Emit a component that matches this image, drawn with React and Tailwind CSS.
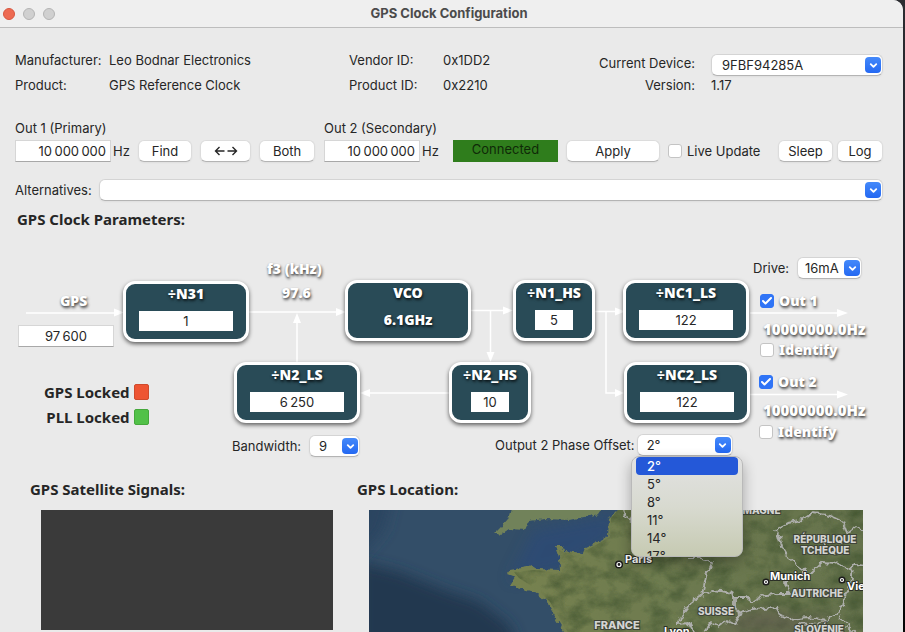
import React, { useState } from 'react';
import clsx from 'clsx';
import { Check, ChevronDown } from 'lucide-react';

const PHASES = ['2°', '5°', '8°', '11°', '14°', '17°'];

const GLOW = '[text-shadow:1px_2px_3px_rgba(0,0,0,0.6),0px_1px_2px_rgba(0,0,0,0.35)]';

function SelectBox({ label, id, options, className, selectClass = 'pl-2', ...props }) {
  return (
    <div className={clsx('relative h-[22px]', className)}>
      <select
        id={id}
        aria-label={label}
        className={clsx(
          'h-full w-full appearance-none rounded-md border border-[#d4d4d4] border-b-[#b4b4b4] bg-white text-[13px] leading-4 text-[#262626] shadow-xs outline-none',
          selectClass
        )}
        {...props}
      >
        {options.map((option) => (
          <option key={option}>{option}</option>
        ))}
      </select>
      <span className="pointer-events-none absolute top-[3px] right-[2px] flex size-4 items-center justify-center rounded-sm bg-gradient-to-b from-[#4489fa] to-[#2468f2] text-white">
        <ChevronDown size={11} strokeWidth={4} />
      </span>
    </div>
  );
}

function PushButton({ children, className, ...props }) {
  return (
    <button
      className={clsx(
        'flex h-[22px] items-center justify-center rounded-md border border-[#dcdcdc] border-b-[#b4b4b4] bg-white shadow-xs active:bg-gray-100',
        className
      )}
      {...props}
    >
      {children}
    </button>
  );
}

function TickBox({ id, ...props }) {
  return (
    <span className="relative flex size-[14px] shrink-0">
      <input
        id={id}
        type="checkbox"
        className="peer size-full appearance-none rounded-[3px] border border-[#c4c4c4] bg-white checked:border-[#2f74f6] checked:bg-[#2f74f6]"
        {...props}
      />
      <Check
        size={12}
        strokeWidth={4}
        className="pointer-events-none absolute top-px left-px hidden text-white peer-checked:block"
      />
    </span>
  );
}

function FrequencyField({ id, label, className }) {
  return (
    <div className={className}>
      <label htmlFor={id} className="block whitespace-nowrap">
        {label}
      </label>
      <div className="mt-1 flex items-center gap-[2px]">
        <input
          id={id}
          defaultValue={'10\u2009000\u2009000'}
          className="h-[22px] w-24 border border-[#d6d6d6] border-b-[#a8a8a8] bg-white pr-1 text-right outline-none"
        />
        <span>Hz</span>
      </div>
    </div>
  );
}

function Node({ title, value, text, place, width, inputWidth }) {
  return (
    <div
      className={clsx(
        'absolute flex h-[61px] flex-col items-center gap-[7px] rounded-xl border-[3px] border-white bg-[#294b57] shadow-[0_2px_4px_rgba(0,0,0,0.6)]',
        place,
        width
      )}
    >
      <span className={clsx('font-[Noto_Sans] text-sm leading-5 font-black text-white', GLOW)}>{title}</span>
      {text ? (
        <span className={clsx('font-[Noto_Sans] text-sm leading-5 font-black text-white', GLOW)}>{text}</span>
      ) : (
        <input
          aria-label={title}
          defaultValue={value}
          className={clsx('h-5 bg-white text-center outline-none', inputWidth)}
        />
      )}
    </div>
  );
}

function Caption({ children, place, size = 'text-sm' }) {
  return (
    <span
      className={clsx(
        'absolute font-[Noto_Sans] leading-5 font-black whitespace-nowrap text-white',
        size,
        GLOW,
        place
      )}
    >
      {children}
    </span>
  );
}

function OutputToggle({ id, label, place, ...props }) {
  return (
    <div className={clsx('absolute flex items-center gap-[5px]', place)}>
      <TickBox id={id} {...props} />
      <label
        htmlFor={id}
        className={clsx('font-[Noto_Sans] text-sm leading-5 font-black whitespace-nowrap text-white', GLOW)}
      >
        {label}
      </label>
    </div>
  );
}

function Lamp({ label, color }) {
  return (
    <div className="flex items-center justify-end gap-1">
      <span className="font-[Noto_Sans] text-[15px] leading-5 font-bold whitespace-nowrap">{label}</span>
      <span className={clsx('h-4 w-[15px] rounded-xs border', color)} />
    </div>
  );
}

function Wires() {
  return (
    <svg className="absolute inset-0" width="880" height="232" fill="none" stroke="#fff" strokeWidth="1.5">
      <path d="M26 79H116M249 78H338M471 76.500H505M595 77.500H617M750 79H838M750 160.500H838" />
      <path d="M297 129V88M490.500 77V120M449 159H369M606 78V159H617" />
      <g fill="#fff" stroke="none">
        <path d="M114 74.500L124 78.500L114 82.500ZM336 74L346 78L336 82ZM503 72.500L513 76.500L503 80.500ZM615 73.500L625 77.500L615 81.500Z" />
        <path d="M615 155L624 159L615 163ZM837 75L848 79L837 83ZM837 156.500L848 160.500L837 164.500Z" />
        <path d="M293 89L297 79L301 89ZM486.500 118L490.500 128L494.500 118ZM370 155L360 159L370 163Z" />
      </g>
    </svg>
  );
}

function PhaseMenu({ value, onPick }) {
  return (
    <ul
      role="listbox"
      aria-label="Phase offsets"
      className="absolute top-[222px] left-[631px] z-10 h-[101px] w-28 overflow-hidden rounded-lg border border-[#b9b9b9] bg-gradient-to-b from-[#e2e2e2] via-[#d8dad0] to-[#c6cab2] px-1 shadow-[0_6px_14px_rgba(0,0,0,0.3)]"
    >
      {PHASES.map((phase) => (
        <li key={phase}>
          <button
            role="option"
            aria-selected={phase === value}
            onClick={() => onPick(phase)}
            className={clsx(
              'block h-[18px] w-[102px] rounded-sm pl-[11px] text-left leading-[17px]',
              phase === value ? 'bg-[#2458d8] font-medium text-white' : 'text-[#262626]'
            )}
          >
            {phase}
          </button>
        </li>
      ))}
    </ul>
  );
}

function LocationMap() {
  return (
    <svg
      viewBox="0 0 494 122"
      preserveAspectRatio="xMinYMin slice"
      className="block w-full"
      role="img"
      aria-label="Satellite map of western Europe"
    >
      <defs>
        <filter id="coast" filterUnits="userSpaceOnUse" x="-20" y="-20" width="540" height="170">
          <feTurbulence type="fractalNoise" baseFrequency="0.2" numOctaves="2" seed="4" />
          <feDisplacementMap in="SourceGraphic" scale="5" xChannelSelector="R" yChannelSelector="G" />
          <feGaussianBlur stdDeviation="0.5" />
        </filter>
        <filter id="border" filterUnits="userSpaceOnUse" x="-20" y="-20" width="540" height="170">
          <feTurbulence type="fractalNoise" baseFrequency="0.18" numOctaves="1" seed="7" />
          <feDisplacementMap in="SourceGraphic" scale="9" xChannelSelector="R" yChannelSelector="G" />
        </filter>
        <filter id="terrain" filterUnits="userSpaceOnUse" x="0" y="0" width="494" height="122">
          <feTurbulence type="fractalNoise" baseFrequency="0.05 0.07" numOctaves="5" seed="9" />
          <feColorMatrix values="0 0 0 0 0.05  0 0 0 0 0.085  0 0 0 0 0.028  1.4 0 0 0 -0.5" />
          <feComposite in2="SourceGraphic" operator="in" />
        </filter>
        <filter id="fade" filterUnits="userSpaceOnUse" x="-60" y="-60" width="620" height="260">
          <feGaussianBlur stdDeviation="7" />
        </filter>
        <linearGradient id="land" x1="0" x2="1">
          <stop offset="0" stopColor="#778250" />
          <stop offset="0.4" stopColor="#6e7b50" />
          <stop offset="1" stopColor="#64714c" />
        </linearGradient>
      </defs>

      <rect width="494" height="122" fill="#334e68" />
      <path d="M-20 -20H25L15 20L-20 60Z" fill="#2a4460" filter="url(#fade)" />
      <path d="M-10 52L30 62L75 80L110 92L140 115L150 140H-10Z" fill="#22384f" filter="url(#fade)" />
      <path d="M165 20L250 4L240 30L190 62L140 70Z" fill="#29497a" opacity="0.6" filter="url(#fade)" />

      <g filter="url(#coast)">
        <path
          d="M144 -8L139 9L131 18L126 23L131 25L140 19L156 20L160 11L176 9L200 10L215 7L230 4L238 -8Z"
          fill="#71825a"
        />
        <path
          d="M256 -8L240 8L239 27L216 38L214 43L196 41L193 36L186 36L190 47L191 60L168 59L163 56L141 60L138 64L146 67L141 75L168 83L178 92L184 103L198 126H510V-8Z"
          fill="url(#land)"
        />
      </g>
      <path
        d="M256 -8L242 8L241 27L218 40L196 43L190 40L193 62L165 60L145 62L150 68L170 81L181 92L201 126H494V-8Z"
        fill="#000"
        filter="url(#terrain)"
      />
      <path d="M345 122L370 104L400 99L430 108L470 104L440 122Z" fill="#5e5850" opacity="0.6" filter="url(#fade)" />

      <g fill="none" stroke="#aeafac" strokeWidth="1.800" strokeLinejoin="round" filter="url(#border)">
        <path d="M254 -2L256 7L262 10L266 3" />
        <path d="M319 48L332 48L343 53L337 66L333 85L344 80L358 82L366 87L366 98L372 103L384 99L406 97L410 104L420 109L440 107L458 110L468 104L474 95L476 85L481 75L483 57" />
        <path d="M366 87L378 87L384 92L392 87L408 84L420 84L416 72L418 64L430 64L436 62L444 62L454 52L466 53L478 58L486 55L498 56" />
        <path d="M436 62L421 50L413 37L411 28L406 20L420 13L434 10L444 2L456 4L466 8L474 12L478 23L486 17L498 22" />
        <path d="M333 85L322 93L314 103L309 114L320 113L326 124M334 124L342 113L350 116L358 110L366 114L372 104" />
        <path d="M470 106L478 116L486 124M428 124L430 114L446 116L458 110" />
      </g>

      <g
        className="font-[Inter] text-[10px] font-extrabold"
        fill="#d4d5d2"
        stroke="#3f4438"
        strokeWidth="2"
        paintOrder="stroke"
        textAnchor="middle"
      >
        <text x="380" y="4">ALLEMAGNE</text>
        <text x="456" y="33">RÉPUBLIQUE</text>
        <text x="456" y="44">TCHÈQUE</text>
        <text x="448" y="87">AUTRICHE</text>
        <text x="347" y="105">SUISSE</text>
        <text x="248" y="119" className="text-[11px]">FRANCE</text>
        <text x="450" y="123">SLOVÉNIE</text>
      </g>
      <g className="font-[Inter] text-[11px] font-bold" fill="#fff" stroke="#2b2f26" strokeWidth="2" paintOrder="stroke">
        <text x="256" y="53">Paris</text>
        <text x="401" y="70">Munich</text>
        <text x="478" y="80">Vienne</text>
        <text x="295" y="125">Lyon</text>
      </g>
      <g fill="#1c1c1c" stroke="#fff" strokeWidth="1.200">
        <circle cx="250" cy="54.500" r="3.500" stroke="#1c1c1c" />
        <circle cx="250" cy="54.500" r="2" />
        <circle cx="397" cy="72" r="3" stroke="#1c1c1c" />
        <circle cx="397" cy="72" r="1.500" />
        <circle cx="473" cy="70" r="3" stroke="#1c1c1c" />
        <circle cx="473" cy="70" r="1.500" />
      </g>
    </svg>
  );
}

function App() {
  const [phase, setPhase] = useState('2°');
  const [menuOpen, setMenuOpen] = useState(true);

  const pickPhase = (next) => {
    setPhase(next);
    setMenuOpen(false);
  };

  return (
    <div className="h-screen overflow-hidden bg-gradient-to-b from-[#2c2d31] via-[#1b1d26] to-[#050505] pr-[2px] font-[Inter,sans-serif] text-[13px] leading-4 text-[#262626]">
      <div className="flex min-h-full flex-col overflow-hidden rounded-tr-[10px] bg-[#eaeaea]">
        <header className="flex h-7 shrink-0 items-center border-b border-[#bdbdbd] bg-[#efefef] pl-[3px]">
          <div className="flex gap-2">
            <button aria-label="Close" className="size-3 rounded-full border border-[#d8563f] bg-[#ed6a52]" />
            <button aria-label="Minimise" className="size-3 rounded-full border border-[#b4b4b4] bg-[#d0d0d0]" />
            <button aria-label="Zoom" className="size-3 rounded-full border border-[#b4b4b4] bg-[#d0d0d0]" />
          </div>
          <h1 className="flex-1 pr-[60px] pb-px text-center font-bold text-[#4b4b4b]">GPS Clock Configuration</h1>
        </header>

        <section className="flex justify-between pt-5 pr-5 pl-[15px]">
          <dl className="grid grid-cols-[94px_240px_94px_auto] leading-[25px] whitespace-nowrap">
            <dt>Manufacturer:</dt>
            <dd>Leo Bodnar Electronics</dd>
            <dt>Vendor ID:</dt>
            <dd>0x1DD2</dd>
            <dt>Product:</dt>
            <dd>GPS Reference Clock</dd>
            <dt>Product ID:</dt>
            <dd>0x2210</dd>
          </dl>
          <div className="grid grid-cols-[auto_172px] content-start items-center gap-x-4 gap-y-px pt-[6px] text-right">
            <label htmlFor="device" className="pb-1">
              Current Device:
            </label>
            <SelectBox id="device" options={['9FBF94285A']} selectClass="pl-[10px]" />
            <span>Version:</span>
            <span className="text-left">1.17</span>
          </div>
        </section>

        <section className="flex items-end pt-[22px] pr-5 pl-[15px]">
          <FrequencyField id="out1" label="Out 1 (Primary)" className="w-[123px] shrink-0" />
          <PushButton className="w-[54px]">Find</PushButton>
          <PushButton className="ml-2 w-[51px]" aria-label="Swap outputs">
            <svg width="24" height="10" viewBox="0 0 24 10" fill="none" stroke="currentColor" strokeWidth="1.400">
              <path d="M10.500 5H1.500M5.500 1L1.500 5L5.500 9M13.500 5H22.500M18.500 1L22.500 5L18.500 9" />
            </svg>
          </PushButton>
          <PushButton className="ml-2 w-14">Both</PushButton>
          <FrequencyField id="out2" label="Out 2 (Secondary)" className="ml-[9px] w-[129px] shrink-0" />
          <div className="h-[22px] w-[105px] bg-[#2f7d1c] pt-px text-center text-[#0f2a08]">Connected</div>
          <PushButton className="ml-2 w-[94px]">Apply</PushButton>
          <div className="ml-2 flex h-[22px] items-center gap-[5px]">
            <TickBox id="live" />
            <label htmlFor="live" className="whitespace-nowrap">
              Live Update
            </label>
          </div>
          <PushButton className="ml-auto w-[55px]">Sleep</PushButton>
          <PushButton className="ml-1 w-[46px]">Log</PushButton>
        </section>

        <section className="flex items-center gap-2 pt-[17px] pr-5 pl-[15px]">
          <label htmlFor="alternatives" className="w-[76px]">
            Alternatives:
          </label>
          <SelectBox id="alternatives" options={['']} className="flex-1" />
        </section>

        <h2 className="pt-2 pl-[17px] font-[Noto_Sans] text-[15px] leading-5 font-bold">GPS Clock Parameters:</h2>

        <section className="relative mt-[5px] h-[232px] shrink-0">
          <Wires />

          <Caption place="top-[57px] left-[60px]">GPS</Caption>
          <input
            aria-label="GPS frequency"
            defaultValue={'97\u2009600'}
            className="absolute top-[91px] left-[18px] h-[22px] w-24 border border-[#d6d6d6] border-b-[#a8a8a8] bg-white text-center outline-none"
          />
          <Caption place="top-[25px] left-[267px]">f3 (kHz)</Caption>
          <Caption place="top-[49px] left-[282px]">97.6</Caption>

          <Node title="÷N31" value="1" place="top-[47px] left-[123px]" width="w-[126px]" inputWidth="w-[94px]" />
          <Node title="VCO" text="6.1GHz" place="top-[46px] left-[345px]" width="w-[126px]" />
          <Node title="÷N1_HS" value="5" place="top-[46px] left-[513px]" width="w-[82px]" inputWidth="w-[38px]" />
          <Node title="÷NC1_LS" value="122" place="top-[46px] left-[623px]" width="w-[126px]" inputWidth="w-[94px]" />
          <Node title="÷N2_LS" value={'6\u2009250'} place="top-[128px] left-[234px]" width="w-[126px]" inputWidth="w-[94px]" />
          <Node title="÷N2_HS" value="10" place="top-[128px] left-[449px]" width="w-[82px]" inputWidth="w-[38px]" />
          <Node title="÷NC2_LS" value="122" place="top-[128px] left-[624px]" width="w-[126px]" inputWidth="w-[94px]" />

          <div className="absolute top-[23px] left-[753px] flex items-center gap-2">
            <label htmlFor="drive">Drive:</label>
            <SelectBox id="drive" options={['16mA']} className="w-[65px]" selectClass="pl-[7px]" />
          </div>

          <OutputToggle id="o1" label="Out 1" place="top-[57px] left-[760px]" defaultChecked />
          <Caption place="top-[85px] left-[763px]" size="text-[15px]">10000000.0Hz</Caption>
          <OutputToggle id="i1" label="Identify" place="top-[106px] left-[760px]" />
          <OutputToggle id="o2" label="Out 2" place="top-[138px] left-[759px]" defaultChecked />
          <Caption place="top-[166px] left-[763px]" size="text-[15px]">10000000.0Hz</Caption>
          <OutputToggle id="i2" label="Identify" place="top-[188px] left-[759px]" />

          <div className="absolute top-[148px] left-[44px] flex flex-col gap-[5px]">
            <Lamp label="GPS Locked" color="border-[#cf4a2c] bg-[#ee5432]" />
            <Lamp label="PLL Locked" color="border-[#45a83b] bg-[#52c148]" />
          </div>

          <div className="absolute top-[201px] left-[232px] flex items-center gap-2">
            <label htmlFor="bandwidth">Bandwidth:</label>
            <SelectBox id="bandwidth" options={['9']} className="w-[51px]" selectClass="pl-[9px]" />
          </div>

          <div className="absolute top-[200px] left-[495px] flex items-center gap-[2px]">
            <label htmlFor="phase" className="whitespace-nowrap">
              Output 2 Phase Offset:
            </label>
            <SelectBox
              id="phase"
              options={PHASES}
              value={phase}
              onChange={(e) => setPhase(e.target.value)}
              onClick={() => setMenuOpen(!menuOpen)}
              className="w-24"
              selectClass="pl-[9px]"
            />
          </div>
          {menuOpen && <PhaseMenu value={phase} onPick={pickPhase} />}
        </section>

        <section className="grid grid-cols-[327px_1fr] pt-[13px] pr-10 pl-[30px]">
          <div>
            <h2 className="font-[Noto_Sans] text-[15px] leading-5 font-bold">GPS Satellite Signals:</h2>
            <div className="mt-[11px] mr-6 ml-[11px] h-[120px] bg-[#3a3a3a]" />
          </div>
          <div>
            <h2 className="font-[Noto_Sans] text-[15px] leading-5 font-bold">GPS Location:</h2>
            <div className="mt-[11px] ml-3">
              <LocationMap />
            </div>
          </div>
        </section>
      </div>
    </div>
  );
}

export default App;
